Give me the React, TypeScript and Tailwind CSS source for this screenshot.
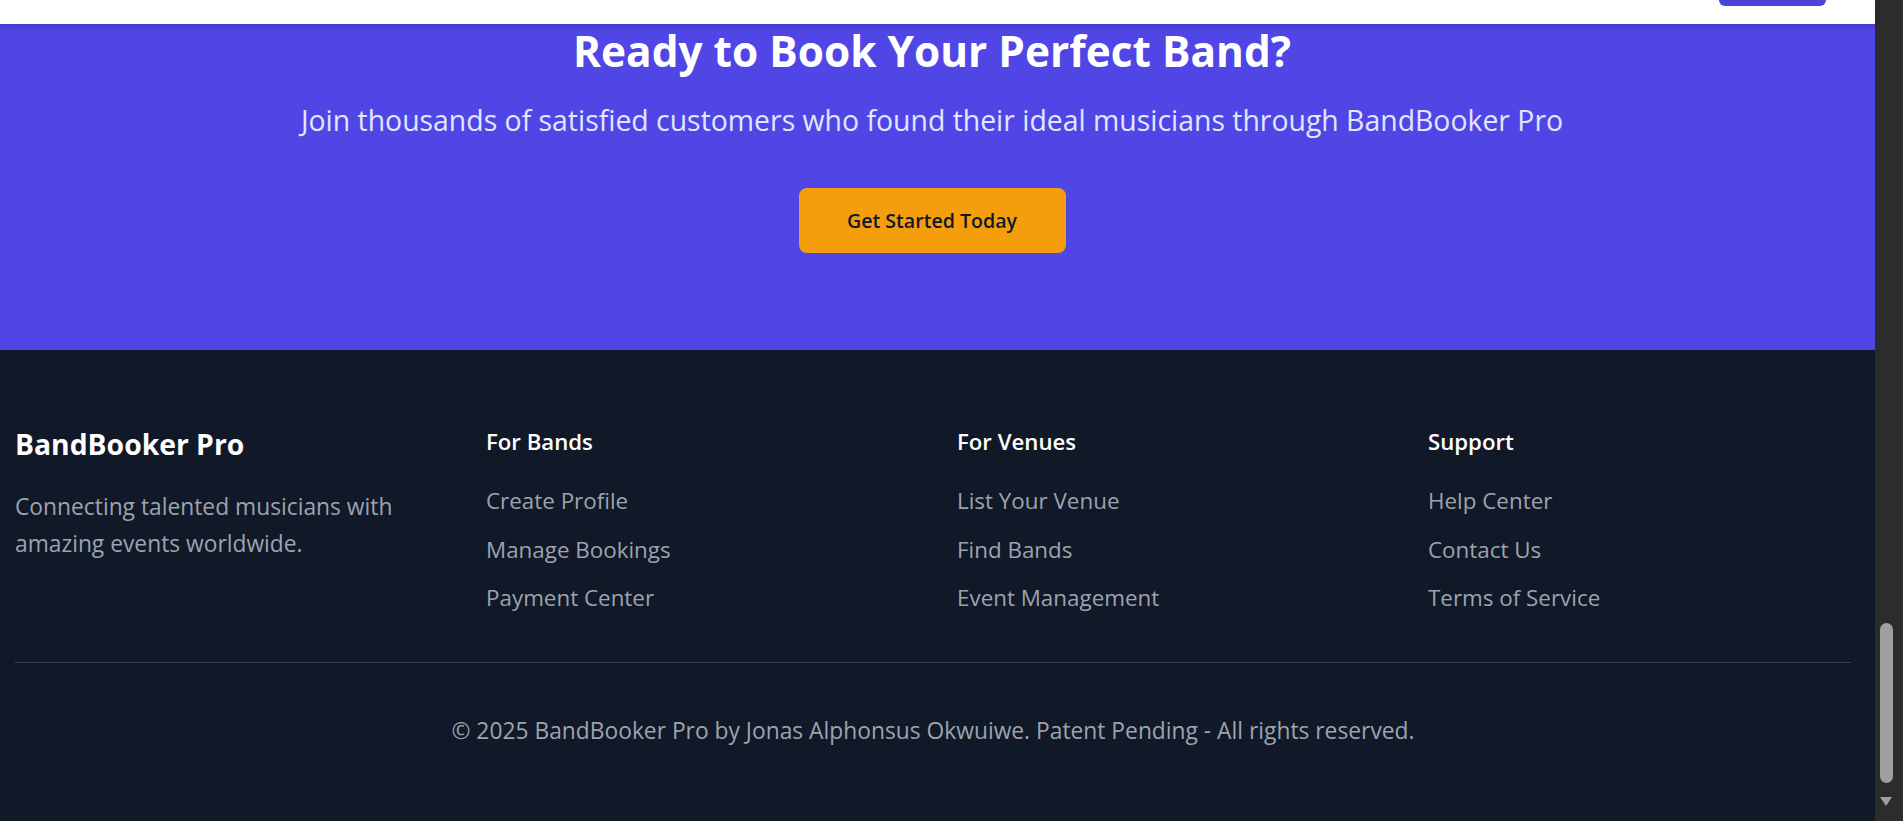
import React from "react";

const bands = ["Create Profile", "Manage Bookings", "Payment Center"];
const venues = ["List Your Venue", "Find Bands", "Event Management"];
const support = ["Help Center", "Contact Us", "Terms of Service"];

function LinkCol({ title, items }: { title: string; items: string[] }) {
  return (
    <div className="flex flex-col">
      <h4 className="text-[22.2px] leading-[35px] font-semibold text-white">{title}</h4>
      <ul className="mt-[27px] flex flex-col gap-[18.5px]">
        {items.map((t) => (
          <li key={t} className="text-[22.4px] leading-[30px] text-[#9ca3af]">
            {t}
          </li>
        ))}
      </ul>
    </div>
  );
}

export default function App() {
  return (
    <div className="flex h-[821px] w-[1903px] overflow-hidden font-['Open_Sans',sans-serif]">
      <div className="flex w-[1875px] flex-col">
        {/* header strip */}
        <div className="relative z-10 flex h-[24px] justify-end bg-white pr-[49px] shadow-[0_2px_6px_rgba(0,0,0,0.18)]">
          <div className="h-[6px] w-[107px] rounded-b-lg bg-[#4b44d8]" />
        </div>

        {/* CTA */}
        <section className="flex h-[326px] flex-col items-center bg-[#4f46e5] pr-[11px]">
          <h2 className="text-[42.4px] leading-[54px] font-bold text-white">Ready to Book Your Perfect Band?</h2>
          <p className="mt-[24.5px] text-[28.4px] leading-[35px] text-[#e0e7ff]">
            Join thousands of satisfied customers who found their ideal musicians through BandBooker Pro
          </p>
          <button className="mt-[50.5px] flex h-[65px] w-[267px] items-center justify-center rounded-lg bg-[#f59e0b] text-[19.6px] font-semibold text-[#111827]">
            Get Started Today
          </button>
        </section>

        {/* footer */}
        <footer className="flex-1 bg-[#111827] pt-[74px]">
          <div className="ml-[15px] w-[1836px]">
            <div className="grid grid-cols-4 gap-12">
              <div className="flex flex-col">
                <h3 className="text-[28.3px] leading-[40px] font-bold text-white">BandBooker Pro</h3>
                <p className="mt-[25px] w-[423px] text-[22.8px] leading-[36.5px] text-[#9ca3af]">
                  Connecting talented musicians with amazing events worldwide.
                </p>
              </div>
              <LinkCol title="For Bands" items={bands} />
              <LinkCol title="For Venues" items={venues} />
              <LinkCol title="Support" items={support} />
            </div>
            <div className="mt-[49px] border-t border-[#374151] pt-[53px] text-center">
              <p className="text-[22.8px] leading-[30px] text-[#9ca3af]">
                © 2025 BandBooker Pro by Jonas Alphonsus Okwuiwe. Patent Pending - All rights reserved.
              </p>
            </div>
          </div>
        </footer>
      </div>

      {/* scrollbar strip */}
      <div className="flex w-[28px] flex-col bg-[#2c2c2c]">
        <div className="flex flex-1 flex-col items-start pl-[5px]">
          <div className="mt-[623px] h-[160px] w-[13px] rounded-full bg-[#9f9f9f]" />
          <div className="mt-[14px] h-0 w-0 border-x-[6.5px] border-t-[9px] border-x-transparent border-t-[#9f9f9f]" />
        </div>
      </div>
    </div>
  );
}
